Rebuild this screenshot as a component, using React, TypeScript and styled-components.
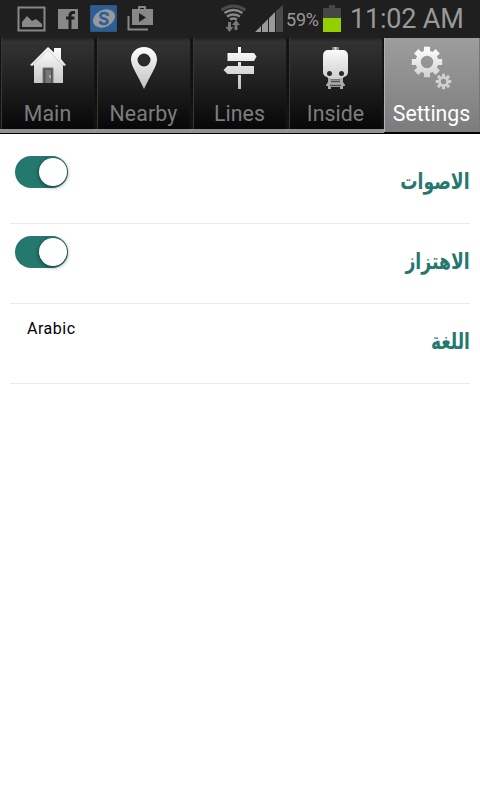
import React from 'react';
import styled, { createGlobalStyle } from 'styled-components';

const GlobalStyle = createGlobalStyle`
  * { box-sizing: border-box; }
  body { margin: 0; background: #fff; font-family: Roboto, sans-serif; }
`;

const Screen = styled.main`
  width: 480px;
  height: 800px;
  overflow: hidden;
  background: #fff;
`;

const StatusBar = styled.header`
  display: flex;
  align-items: flex-start;
  height: 38px;
  background: #1f1f1f;
  color: #999;
`;

const StatusIcon = styled.svg<{ $w: number; $gap: number }>`
  display: block;
  flex: none;
  width: ${p => p.$w}px;
  height: 38px;
  margin-left: ${p => p.$gap}px;
`;

const Percent = styled.span`
  width: 33px;
  margin-left: 3px;
  font-size: 18px;
  line-height: 40px;
  letter-spacing: -0.2px;
  white-space: nowrap;
`;

const Clock = styled.time`
  margin-left: 9px;
  font-size: 27px;
  line-height: 38px;
  letter-spacing: -0.2px;
  white-space: nowrap;
`;

const TabBar = styled.nav`
  display: grid;
  grid-template-columns: repeat(5, 96px);
  height: 96px;
  background: #000;
`;

const Tab = styled.button<{ $active: boolean }>`
  display: flex;
  flex-direction: column;
  align-items: center;
  height: ${p => (p.$active ? 94 : 95)}px;
  padding: 6px 2px 0 1px;
  border: 0;
  border-left: 1px solid ${p => (p.$active ? '#b2b2b2' : '#111')};
  border-right: 1px solid ${p => (p.$active ? '#777' : '#050505')};
  border-bottom: ${p => (p.$active ? '0' : '4px solid #8e8e8e')};
  border-image: ${p => (p.$active ? 'none' : 'linear-gradient(#111 91px, #929292 91px) 1 1 4 1')};
  color: ${p => (p.$active ? '#fff' : '#7d7d7d')};
  background: ${p => p.$active
    ? 'linear-gradient(#9d9d9d, #7c7c7c)'
    : 'linear-gradient(90deg, #383838 1px, transparent 1px, transparent 93px, #171717 93px) , linear-gradient(#222 0, #333 4px, #1d1d1d 50px, #070707 91px)'};
  font-family: Roboto, sans-serif;
`;

const TabIcon = styled.svg`
  display: block;
  flex: none;
  width: 48px;
  height: 48px;
`;

const TabLabel = styled.span<{ $tracking: number }>`
  margin-top: 7px;
  font-size: 21.3px;
  line-height: 29px;
  letter-spacing: ${p => p.$tracking}px;
  white-space: nowrap;
`;

const SettingsList = styled.section`
  padding: 10px 10px 0;
`;

const SettingRow = styled.div`
  display: flex;
  justify-content: space-between;
  height: 80px;
  border-bottom: 1px solid #ebebeb;
`;

const SettingName = styled.span<{ $stretch: number }>`
  height: 30px;
  margin-top: 22px;
  color: #25786e;
  font-family: 'DejaVu Sans', sans-serif;
  font-size: 20px;
  font-weight: 700;
  line-height: 30px;
  white-space: nowrap;
  transform: scale(${p => p.$stretch}, 1.12);
  transform-origin: right center;
`;

const Switch = styled.button`
  display: flex;
  justify-content: flex-end;
  align-items: center;
  width: 53px;
  height: 32px;
  margin: 12px 0 0 5px;
  padding: 0 1px;
  border: 0;
  border-radius: 16px;
  background: #25786e;
`;

const Thumb = styled.span`
  width: 28px;
  height: 28px;
  border-radius: 50%;
  background: #fff;
  box-shadow: 0 1px 4px rgba(0, 0, 0, 0.55);
`;

const Language = styled.span`
  margin: 15px 0 0 17px;
  color: #000;
  font-size: 16px;
  line-height: 20px;
  letter-spacing: 0.5px;
`;

const gearPath = (cx: number, cy: number, outer: number, root: number, hole: number) => {
  const points: string[] = [];
  for (let i = 0; i < 8; i++) {
    const a = (i * Math.PI) / 4;
    [[-0.27, root], [-0.2, outer], [0.2, outer], [0.27, root]].forEach(([d, r]) => {
      points.push(`${cx + Math.sin(a + d) * r} ${cy - Math.cos(a + d) * r}`);
    });
  }
  return `M${points.join('L')}Z M${cx - hole} ${cy}a${hole} ${hole} 0 1 0 ${hole * 2} 0a${hole} ${hole} 0 1 0 ${-hole * 2} 0Z`;
};

const HomeArt = () => (
  <>
    <path d="M6 21 24 3l6 5.500V4h7v11l5 6-2 1-1-1v18H10V21l-2 1Z" fill="url(#metal)" />
    <path d="m9 21 15-15 15 16" fill="none" stroke="#c4c4c4" strokeWidth=".8" />
    <path d="M19 39V24h10v15" fill="#555" stroke="#777" />
    <path d="M21.500 39V26H27v13" fill="#777" />
    <path d="M25 31h2v3h-2z" fill="#aaa" />
  </>
);

const PinArt = () => (
  <path fill="url(#metal)" fillRule="evenodd" d="M24 3c-7.5 0-13 5.5-13 12.5 0 7 7 16 13 29.5 6-13.5 13-22.500 13-29.500C37 8.500 31.500 3 24 3Zm0 6.500a6.500 6.500 0 1 1 0 13 6.500 6.500 0 0 1 0-13Z" />
);

const SignArt = () => (
  <path fill="url(#metal)" d="M22 3h3v6h13l2.500 3.500L38 17H11.500V9H22Zm0 15h3v4h13v8H11.500L7.500 26l4-4H22Zm0 13h3v14h-3Z" />
);

const TrainArt = () => (
  <>
    <path d="M20 3h7v4h-7Z" fill="#888" />
    <path d="M22.500 3h2v4h-2Z" fill="#ddd" />
    <path d="M15 6h17q4 1 4 6v16q0 4-4 5l-2 2H17l-2-2q-4-1-4-5V12q0-5 4-6Z" fill="url(#metal)" />
    <path d="M17 35h13v3H17Z" fill="#777" />
    <path d="M16 34h3v2h9v-2h3v4l2 3v1h-2v3h-3v-2h-9v2h-3v-3h-2v-1l2-3Z" fill="#aaa" />
    <path d="M19 37.500h9M18 41.500h11" stroke="#505050" strokeWidth="1.500" />
    <circle cx="17.500" cy="29.500" r="2.500" fill="#292929" />
    <circle cx="29.500" cy="29.500" r="2.500" fill="#292929" />
  </>
);

const GearArt = () => (
  <>
    <path fill="url(#metal)" fillRule="evenodd" d={gearPath(19, 18, 15.5, 11.5, 6.2)} />
    <path fill="#d0d0d0" fillRule="evenodd" d={gearPath(35.5, 37.5, 8, 5.5, 2.7)} />
  </>
);

const tabs = [
  { label: 'Main', art: HomeArt, tracking: 0.15 },
  { label: 'Nearby', art: PinArt, tracking: 0.15 },
  { label: 'Lines', art: SignArt, tracking: 0.05 },
  { label: 'Inside', art: TrainArt, tracking: 0.05 },
  { label: 'Settings', art: GearArt, tracking: -0.05 },
];

const toggles = [
  { name: 'الاصوات', stretch: 0.86 },
  { name: 'الاهتزاز', stretch: 0.86 },
];

export default function App() {
  return (
    <Screen>
      <GlobalStyle />
      <StatusBar>
        <StatusIcon $w={30} $gap={17} viewBox="0 0 30 38">
          <path d="M1.500 7.500h26v23h-26Z" fill="none" stroke="#888" strokeWidth="2" />
          <path d="M5 27v-5l5-6 5 5 4-2 6 5v3Z" fill="#888" />
        </StatusIcon>
        <StatusIcon $w={20} $gap={11} viewBox="0 0 20 38">
          <path d="M0 9h20v20H0Z" fill="#888" />
          <path d="M17 12.500h-2q-3 0-3 3V29M8 18h8.500" fill="none" stroke="#1f1f1f" strokeWidth="3" />
        </StatusIcon>
        <StatusIcon $w={27} $gap={12} viewBox="0 0 27 38">
          <path d="M.5 5.500h26v26H.5Z" fill="#2c5f96" stroke="#315579" />
          <ellipse cx="14" cy="18.500" rx="11.500" ry="8.500" transform="rotate(-28 14 18.500)" fill="#999" />
          <path d="M17.500 16v-2q-1.500-1-3.500-1-3.500 0-3.500 2.700 0 2 3.500 2.800t3.500 2.800q0 2.700-3.500 2.700-2 0-3.500-1v-2" fill="none" stroke="#2c5f96" strokeWidth="2.500" />
        </StatusIcon>
        <StatusIcon $w={27} $gap={10} viewBox="0 0 27 38">
          <path d="M5 9h6V7q0-1 1-1h6q1 0 1 1v2h7v16H5ZM13 8v1h4V8Zm-1 5v9l7-4.500Z" fill="#888" fillRule="evenodd" />
          <path d="M1.500 16v13.500H21" fill="none" stroke="#888" strokeWidth="2" />
        </StatusIcon>
        <StatusIcon $w={28} $gap={66} viewBox="0 0 28 38">
          <g fill="none" strokeWidth="2.500">
            <path d="M1.500 10q12-8 24 0" stroke="#4b4b4b" strokeWidth="3" />
            <path d="M4.500 13q9-6 18 0M7 16.500q6.500-4 13 0M10 19.500q3.500-2 7 0" stroke="#888" />
          </g>
          <path d="M8 22h3v5h2.500L9.500 32l-4-5H8Zm6.500 8v-5H12l4-5 4 5h-2.500v5Z" fill="#777" />
        </StatusIcon>
        <StatusIcon $w={28} $gap={7} viewBox="0 0 28 38">
          <path d="m0 32 6-6v6Zm7 0v-7l6-6v13Zm7 0V18l6-6v20Z" fill="#999" />
          <path d="m21 32V11l7-6v27Z" fill="#4a4a4a" />
        </StatusIcon>
        <Percent>59%</Percent>
        <StatusIcon $w={18} $gap={4} viewBox="0 0 18 38">
          <path d="M0 8h6V5h6v3h6v10H0Z" fill="#464646" />
          <path d="M0 18h18v14H0Z" fill="#93d000" />
        </StatusIcon>
        <Clock>11:02 AM</Clock>
      </StatusBar>
      <TabBar>
        {tabs.map(({ label, art: Art, tracking }) => (
          <Tab key={label} $active={label === 'Settings'}>
            <TabIcon viewBox="0 0 48 48">
              <defs>
                <linearGradient id="metal" gradientUnits="userSpaceOnUse" x1="0" y1="3" x2="0" y2="45">
                  <stop stopColor="#fff" />
                  <stop offset="1" stopColor="#c0c0c0" />
                </linearGradient>
              </defs>
              <Art />
            </TabIcon>
            <TabLabel $tracking={tracking}>{label}</TabLabel>
          </Tab>
        ))}
      </TabBar>
      <SettingsList>
        {toggles.map(({ name, stretch }) => (
          <SettingRow key={name}>
            <Switch role="switch" aria-checked="true" aria-label={name}><Thumb /></Switch>
            <SettingName dir="rtl" $stretch={stretch}>{name}</SettingName>
          </SettingRow>
        ))}
        <SettingRow>
          <Language>Arabic</Language>
          <SettingName dir="rtl" $stretch={0.85}>اللغة</SettingName>
        </SettingRow>
      </SettingsList>
    </Screen>
  );
}
